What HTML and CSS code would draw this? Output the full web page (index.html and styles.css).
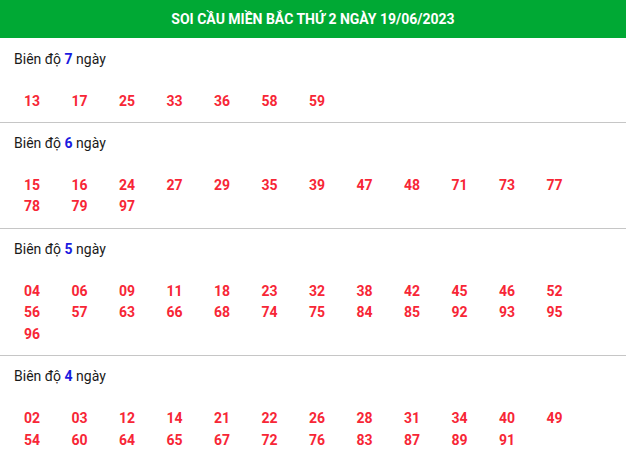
FILE: index.html
```html
<!DOCTYPE html>
<html lang="vi">
<head>
<meta charset="utf-8">
<title>Soi cầu miền Bắc</title>
<link rel="stylesheet" href="styles.css">
</head>
<body>
<div class="box">
  <div class="title">SOI CẦU MIỀN BẮC THỨ 2 NGÀY 19/06/2023</div>
  <div class="sec sec-first">
    <div class="label">Biên độ <b>7</b> ngày</div>
    <div class="nums"><span>13</span><span>17</span><span>25</span><span>33</span><span>36</span><span>58</span><span>59</span></div>
  </div>
  <div class="sec">
    <div class="label">Biên độ <b>6</b> ngày</div>
    <div class="nums"><span>15</span><span>16</span><span>24</span><span>27</span><span>29</span><span>35</span><span>39</span><span>47</span><span>48</span><span>71</span><span>73</span><span>77</span><span>78</span><span>79</span><span>97</span></div>
  </div>
  <div class="sec">
    <div class="label">Biên độ <b>5</b> ngày</div>
    <div class="nums"><span>04</span><span>06</span><span>09</span><span>11</span><span>18</span><span>23</span><span>32</span><span>38</span><span>42</span><span>45</span><span>46</span><span>52</span><span>56</span><span>57</span><span>63</span><span>66</span><span>68</span><span>74</span><span>75</span><span>84</span><span>85</span><span>92</span><span>93</span><span>95</span><span>96</span></div>
  </div>
  <div class="sec">
    <div class="label">Biên độ <b>4</b> ngày</div>
    <div class="nums"><span>02</span><span>03</span><span>12</span><span>14</span><span>21</span><span>22</span><span>26</span><span>28</span><span>31</span><span>34</span><span>40</span><span>49</span><span>54</span><span>60</span><span>64</span><span>65</span><span>67</span><span>72</span><span>76</span><span>83</span><span>87</span><span>89</span><span>91</span></div>
  </div>
</div>
</body>
</html>
```
FILE: styles.css
```css
html, body {
  margin: 0;
  padding: 0;
  background: #fff;
}
body {
  font-family: Roboto, "Liberation Sans", Arial, sans-serif;
  font-size: 14px;
  color: #1a1a1a;
}
.box {
  width: 626px;
}
.title {
  height: 38px;
  line-height: 38px;
  background: #00a934;
  color: #fff;
  font-weight: bold;
  font-size: 14px;
  text-align: center;
}
.sec {
  padding: 10px 14px 10px 14px;
  border-bottom: 1px solid #c6c6c6;
}
.sec-first {
  padding-top: 11px;
  padding-bottom: 9px;
}
.label {
  line-height: 21px;
}
.label b {
  color: #1a1ae0;
  font-weight: bold;
}
.nums {
  margin-top: 21px;
  display: grid;
  grid-template-columns: repeat(12, 47.5px);
}
.nums span {
  padding-left: 10px;
  line-height: 21.5px;
  color: #f72636;
  font-weight: bold;
}
```
